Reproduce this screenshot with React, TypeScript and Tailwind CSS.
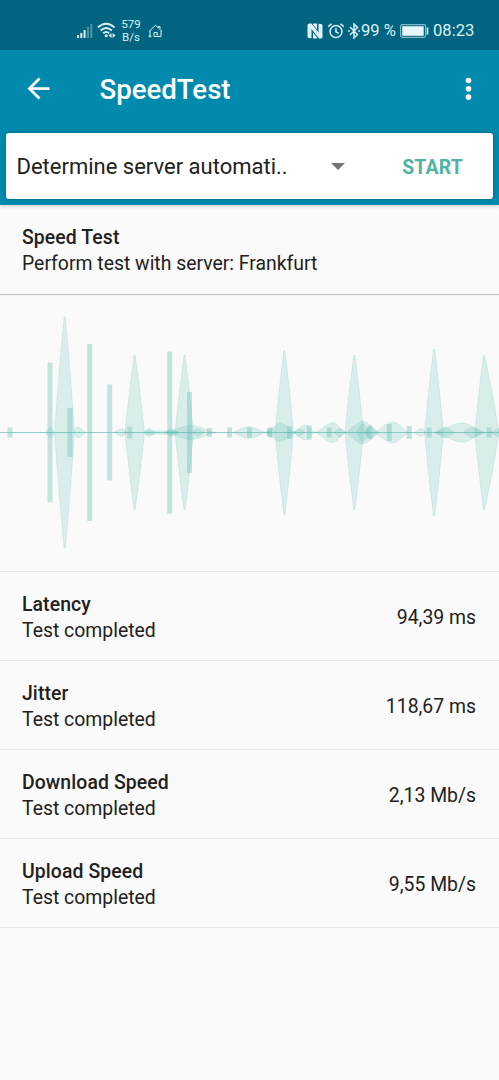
import React from 'react';

interface TestResult {
  title: string;
  status: string;
  value: string;
}

const results: TestResult[] = [
  { title: 'Latency', status: 'Test completed', value: '94,39 ms' },
  { title: 'Jitter', status: 'Test completed', value: '118,67 ms' },
  { title: 'Download Speed', status: 'Test completed', value: '2,13 Mb/s' },
  { title: 'Upload Speed', status: 'Test completed', value: '9,55 Mb/s' },
];

// [center x, half height]
const bars: [number, number][] = [
  [10, 5], [50, 70], [70, 24.5], [89.7, 88.5], [109.7, 48], [129.7, 6], [169.7, 81], [189.5, 40.5],
  [209.5, 4.5], [229.5, 5], [249.5, 5], [269.5, 4.5], [289.5, 6.5], [309.3, 7], [329.3, 5],
  [369.3, 6], [389.3, 8.5], [409.3, 6.5], [429.2, 5], [489, 5],
];

// [left, peak, right, half height]
const spikes: [number, number, number, number][] = [
  [54.5, 64.7, 74.5, 115.5], [125, 134.6, 144.5, 77], [175, 184.6, 193.5, 77],
  [275, 284.4, 293.5, 82], [345, 354.3, 363.5, 77], [424.5, 434.1, 443.5, 83.5],
  [474.8, 484, 499, 77],
];

const ripples: [number, number, number, number][] = [
  [45, 50.5, 55, 5.5], [73, 78, 86, 5.5], [114, 122, 128, 4], [143, 149, 156, 4], [165, 171, 177, 4],
  [165, 191, 216, 7], [193, 198, 204, 4], [232, 249, 266, 6], [265, 271, 276, 5.5],
  [266, 280, 296, 9], [293, 299, 305, 4], [294, 305, 315, 7.5], [315, 333, 345, 10], [334, 340, 346, 4.5],
  [345, 363, 379, 11.5], [356, 363, 369, 9], [364, 371, 376, 7], [373, 393, 409, 10.5],
  [414, 421, 427, 4], [434, 462, 486, 9.5], [435, 445, 455, 5.5], [463, 472, 483, 5], [490, 499, 508, 4],
];

const spikePath = ([l, p, r, h]: [number, number, number, number]) => {
  const a = l + (p - l) * 0.42;
  const b = r - (r - p) * 0.42;
  return `M${l} 0Q${a} ${-h * 0.53} ${p - 0.6} ${-h}H${p + 0.6}Q${b} ${-h * 0.53} ${r} 0Q${b} ${h * 0.53} ${p + 0.6} ${h}H${p - 0.6}Q${a} ${h * 0.53} ${l} 0Z`;
};

const ripplePath = ([l, p, r, h]: [number, number, number, number]) => {
  const a = p - (p - l) * 0.3;
  const b = p + (r - p) * 0.3;
  const c = l + (p - l) * 0.4;
  const d = r - (r - p) * 0.4;
  return `M${l} 0C${c} ${-h * 0.3} ${a} ${-h} ${p} ${-h}C${b} ${-h} ${d} ${-h * 0.3} ${r} 0C${d} ${h * 0.3} ${b} ${h} ${p} ${h}C${a} ${h} ${c} ${h * 0.3} ${l} 0Z`;
};

const Waveform: React.FC = () => (
  <svg className="block h-[276px] w-full" viewBox="0 -137.5 499 276">
    <g fill="#4db6ac" fillOpacity="0.19" stroke="#4db6ac" strokeOpacity="0.2" strokeWidth="0.8">
      {spikes.map((s) => <path key={s[1]} d={spikePath(s)} />)}
      {ripples.map((s, i) => <path key={i} d={ripplePath(s)} />)}
      <path d="M146 -1.800L178 -1.500V1.500L146 1.800Z" />
    </g>
    <g fill="#4db6ac" fillOpacity="0.32">
      {bars.map(([x, h]) => <rect key={x} x={x - 2.5} y={-h} width="5" height={h * 2} />)}
    </g>
    <path d="M0 0H499" stroke="#4db6ac" strokeOpacity="0.6" />
  </svg>
);

const StatusBar: React.FC = () => (
  <div className="flex h-[50px] items-center bg-[#026480] pt-3 text-[#d9f1f7]">
    <svg className="ml-[76px] h-5 w-[18px]" viewBox="0 0 18 20" fill="currentColor">
      <path d="M1 14h2v3H1zM4.300 12h2v5h-2zM7.600 9h2v8h-2z" />
      <path d="M11 6h2v11h-2zM14.300 3h2v14h-2z" opacity="0.35" />
    </svg>
    <svg className="ml-[3px] h-5 w-5" viewBox="0 0 20 20" fill="none" stroke="currentColor" strokeWidth="1.900">
      <path d="M.8 6.500Q9.200-.8 17.600 6.500M3.600 9.500Q9.200 4.700 14.800 9.500M6.200 12.300Q9.200 9.700 12.200 12.300" />
      <circle cx="9.200" cy="14.800" r="1.500" fill="currentColor" stroke="none" />
      <path d="M14.500 12v5l-3-2.500zM15.600 12v5l3-2.500z" fill="currentColor" stroke="none" />
    </svg>
    <div className="ml-[4px] w-[20px] text-center text-[11.5px] leading-[13px]">
      <div>579</div>
      <div>B/s</div>
    </div>
    <svg className="ml-[7px] h-4 w-4" viewBox="0 0 16 16" fill="none" stroke="currentColor" strokeWidth="1">
      <path d="M2 13V8.200H1.300L7.500 2.300L10.500 5V3.500H12V6.500L13.700 8.200H13V13.500H6V9.500H9.200V11.500" />
      <circle cx="2" cy="13.300" r="0.900" />
      <circle cx="9.200" cy="11.500" r="0.500" />
    </svg>

    <svg className="ml-auto h-4 w-4" viewBox="0 0 16 16">
      <path d="M2.500.5H4.500L11.500 9.500V.8L14 1Q15.500 1 15.500 2.500V14Q15.500 15.500 14 15.500H12L4.500 6V15.300L2 15Q.5 15 .5 13.500V2Q.5.5 2.500.5Z" fill="currentColor" />
      <path d="M6 .5H10V6.500L6 1.500ZM6 9.500L10 14.500V15.500H6Z" fill="currentColor" />
    </svg>
    <svg className="ml-[4px] h-[18px] w-[18px]" viewBox="0 0 18 18" fill="none" stroke="currentColor" strokeWidth="1.500">
      <circle cx="9" cy="9.500" r="6" />
      <path d="M9 6V9.800L11.600 11.400M1.200 4.600L4.600 1.700M16.800 4.600L13.400 1.700" />
    </svg>
    <svg className="ml-[3px] h-4 w-3" viewBox="0 0 12 16" fill="none" stroke="currentColor" strokeWidth="1.500">
      <path d="M2 4L9.500 11.500L6 15V1L9.500 4.500L2 12" />
      <path d="M0 8H1.800M10.200 8H12" />
    </svg>
    <span className="ml-[1px] w-[36px] whitespace-nowrap text-[16.6px] leading-5">99 %</span>
    <svg className="ml-[3px] h-4 w-[29px]" viewBox="0 0 29 16">
      <rect x="0.600" y="1.600" width="25" height="12.800" rx="1.800" fill="none" stroke="currentColor" strokeOpacity="0.6" strokeWidth="1.200" />
      <rect x="2.200" y="3.200" width="21.500" height="9.600" fill="#e6f6fa" />
      <path d="M27.500 4.500V11.500" stroke="currentColor" strokeWidth="1.600" />
    </svg>
    <span className="ml-[4px] mr-[24px] w-[42px] text-[16.6px] leading-5">08:23</span>
  </div>
);

const AppBar: React.FC = () => (
  <div className="flex h-[78px] items-center pl-[21.5px] pr-[17px] text-white">
    <svg className="mb-0.5 h-[33px] w-[33px]" viewBox="0 0 24 24" fill="currentColor">
      <path d="M20 11H7.830l5.590-5.590L12 4l-8 8 8 8 1.410-1.410L7.830 13H20v-2z" />
    </svg>
    <h1 className="ml-[45px] pt-0.5 text-[27.6px] font-medium leading-8">SpeedTest</h1>
    <svg className="ml-auto h-[28px] w-[28px]" viewBox="0 0 28 28" fill="currentColor">
      <circle cx="14.500" cy="5.500" r="2.800" />
      <circle cx="14.500" cy="13.800" r="2.800" />
      <circle cx="14.500" cy="22.100" r="2.800" />
    </svg>
  </div>
);

const ServerPicker: React.FC = () => (
  <div className="mx-[6px] mt-[5px] flex h-[66px] items-center rounded-[3px] bg-white pl-[10.5px] pr-[30px] shadow-[0_0_4px_rgba(0,0,0,0.25)]">
    <span className="pt-0.5 text-[22px] leading-7 text-[#212121]">Determine server automati..</span>
    <svg className="ml-auto h-[7px] w-[14px]" viewBox="0 0 14 7">
      <path d="M0 0H14L7 7Z" fill="#757575" />
    </svg>
    <button className="ml-[57px] pt-[3px] text-[19.4px] font-bold leading-7 tracking-[0.2px] text-[#4fb3a3]">START</button>
  </div>
);

const ResultRow: React.FC<{ result: TestResult }> = ({ result }) => (
  <div className="flex h-[89px] items-center justify-between border-b border-[#e6e6e6] pl-[22px] pr-[23px] pt-[3px] text-[19.4px] leading-[26px]">
    <div>
      <div className="font-medium tracking-[0.1px]">{result.title}</div>
      <div>{result.status}</div>
    </div>
    <div>{result.value}</div>
  </div>
);

export default function App() {
  return (
    <div className="flex h-[1080px] w-[499px] flex-col overflow-hidden bg-[#fafafa] font-[Roboto,sans-serif] text-[#212121]">
      <StatusBar />
      <header className="h-[155px] bg-[#018aae] shadow-[0_1px_4px_rgba(0,0,0,0.2)]">
        <AppBar />
        <ServerPicker />
      </header>
      <div className="flex h-[90px] flex-col justify-center border-b border-[#bdbdbd] px-[22px] pt-[3px] text-[19.4px] leading-[26px]">
        <div className="font-medium tracking-[0.1px]">Speed Test</div>
        <div>Perform test with server: Frankfurt</div>
      </div>
      <div className="h-[277px] border-b border-[#e6e6e6]">
        <Waveform />
      </div>
      {results.map((result) => (
        <ResultRow key={result.title} result={result} />
      ))}
    </div>
  );
}
